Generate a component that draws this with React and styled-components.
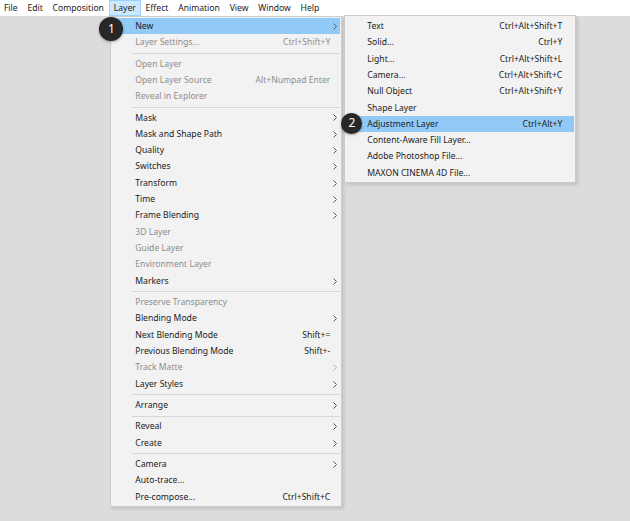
import React from 'react';
import styled, { createGlobalStyle } from 'styled-components';

const GlobalStyle = createGlobalStyle`
  html, body {
    margin: 0;
    padding: 0;
    background: #dcdcdc;
    font-family: "Noto Sans", "Liberation Sans", sans-serif;
    font-size: 8.6px;
    color: #1b1b1b;
  }
  #root {
    width: 630px;
    height: 521px;
    overflow: hidden;
  }
`

const Page = styled.div`
  width: 630px;
  height: 521px;
  background: #dcdcdc;
`

const MenuBar = styled.nav`
  display: flex;
  align-items: stretch;
  height: 16px;
  padding-left: 0;
  margin-left: -1px;
  background: #ffffff;
`

const BarItem = styled.div`
  position: relative;
  display: flex;
  align-items: center;
  padding: 0 3.9px;
  box-sizing: border-box;
  border: 1px solid ${p => p.$open ? '#99d1ff' : 'transparent'};
  background: ${p => p.$open ? '#cce8ff' : 'transparent'};
  white-space: nowrap;
  line-height: 1;
`

const Menu = styled.div`
  position: absolute;
  top: ${p => p.$top}px;
  left: ${p => p.$left};
  width: ${p => p.$width}px;
  box-sizing: border-box;
  padding: ${p => p.$pad || '1px'};
  background: #f2f2f2;
  border: 1px solid #cccccc;
  box-shadow: 2px 2px 3px rgba(0, 0, 0, 0.12);
  z-index: ${p => p.$z || 1};
`

const Row = styled.div`
  position: relative;
  display: grid;
  grid-template-columns: 1fr auto ${p => p.$arrowCol}px;
  align-items: center;
  height: 16.33px;
  padding-left: ${p => p.$indent}px;
  background: ${p => p.$active ? '#91c9f7' : 'transparent'};
  color: ${p => p.$disabled ? '#8d8d8d' : '#1b1b1b'};
  white-space: nowrap;
  line-height: 1;
`

const Shortcut = styled.span`
  text-align: right;
`

const ArrowCell = styled.span`
  display: flex;
  justify-content: flex-end;
  padding-right: 3px;
  color: ${p => p.$disabled ? '#b0b0b0' : '#555555'};
`

const Separator = styled.div`
  height: 5px;
  display: flex;
  align-items: center;
  padding-left: 20px;
  &::after {
    content: '';
    flex: 1;
    height: 1px;
    background: #d6d6d6;
  }
`

const Badge = styled.div`
  position: absolute;
  left: ${p => p.$x}px;
  top: ${p => p.$y}px;
  width: ${p => p.$size}px;
  height: ${p => p.$size}px;
  border-radius: 50%;
  background: #272727;
  color: #ffffff;
  display: flex;
  align-items: center;
  justify-content: center;
  font-family: "Noto Sans", "Liberation Sans", sans-serif;
  font-size: 12px;
  line-height: 1;
  box-shadow: 0 1px 3px rgba(0, 0, 0, 0.35);
  z-index: 5;
`

const Chevron = () => (
  <svg width="4" height="7" viewBox="0 0 4 7">
    <path d="M0.5 0.5 L3.5 3.5 L0.5 6.5" fill="none" stroke="currentColor" strokeWidth="1" />
  </svg>
)

const SEP = { sep: true }

const layerItems = [
  { label: 'New', arrow: true, active: true, submenu: true },
  { label: 'Layer Settings...', shortcut: 'Ctrl+Shift+Y', disabled: true },
  SEP,
  { label: 'Open Layer', disabled: true },
  { label: 'Open Layer Source', shortcut: 'Alt+Numpad Enter', disabled: true },
  { label: 'Reveal in Explorer', disabled: true },
  SEP,
  { label: 'Mask', arrow: true },
  { label: 'Mask and Shape Path', arrow: true },
  { label: 'Quality', arrow: true },
  { label: 'Switches', arrow: true },
  { label: 'Transform', arrow: true },
  { label: 'Time', arrow: true },
  { label: 'Frame Blending', arrow: true },
  { label: '3D Layer', disabled: true },
  { label: 'Guide Layer', disabled: true },
  { label: 'Environment Layer', disabled: true },
  { label: 'Markers', arrow: true },
  SEP,
  { label: 'Preserve Transparency', disabled: true },
  { label: 'Blending Mode', arrow: true },
  { label: 'Next Blending Mode', shortcut: 'Shift+=' },
  { label: 'Previous Blending Mode', shortcut: 'Shift+-' },
  { label: 'Track Matte', arrow: true, disabled: true },
  { label: 'Layer Styles', arrow: true },
  SEP,
  { label: 'Arrange', arrow: true },
  SEP,
  { label: 'Reveal', arrow: true },
  { label: 'Create', arrow: true },
  SEP,
  { label: 'Camera', arrow: true },
  { label: 'Auto-trace...' },
  { label: 'Pre-compose...', shortcut: 'Ctrl+Shift+C' },
]

const newItems = [
  { label: 'Text', shortcut: 'Ctrl+Alt+Shift+T' },
  { label: 'Solid...', shortcut: 'Ctrl+Y' },
  { label: 'Light...', shortcut: 'Ctrl+Alt+Shift+L' },
  { label: 'Camera...', shortcut: 'Ctrl+Alt+Shift+C' },
  { label: 'Null Object', shortcut: 'Ctrl+Alt+Shift+Y' },
  { label: 'Shape Layer' },
  { label: 'Adjustment Layer', shortcut: 'Ctrl+Alt+Y', active: true, badge: '2' },
  { label: 'Content-Aware Fill Layer...' },
  { label: 'Adobe Photoshop File...' },
  { label: 'MAXON CINEMA 4D File...' },
]

const barItems = ['File', 'Edit', 'Composition', 'Layer', 'Effect', 'Animation', 'View', 'Window', 'Help']

const NewSubmenu = () => (
  <Menu $top={-3} $left="calc(100% + 4px)" $width={232} $pad="2px 1px 1px 1px" $z={2}>
    {newItems.map(item => (
      <Row key={item.label} $indent={21} $arrowCol={12} $active={item.active}>
        <span>{item.label}</span>
        <Shortcut>{item.shortcut}</Shortcut>
        <span />
        {item.badge && <Badge $x={-5} $y={-3} $size={21}>{item.badge}</Badge>}
      </Row>
    ))}
  </Menu>
)

const LayerMenu = () => (
  <Menu $top={15} $left="0.5px" $width={232}>
    {layerItems.map((item, i) => item.sep ? (
      <Separator key={'sep' + i} />
    ) : (
      <Row key={item.label} $indent={23} $arrowCol={10} $active={item.active} $disabled={item.disabled}>
        <span>{item.label}</span>
        <Shortcut>{item.shortcut}</Shortcut>
        <ArrowCell $disabled={item.disabled}>{item.arrow && <Chevron />}</ArrowCell>
        {item.submenu && <NewSubmenu />}
      </Row>
    ))}
    <Badge $x={-12} $y={0} $size={24}>1</Badge>
  </Menu>
)

export default function App() {
  return (
    <Page>
      <GlobalStyle />
      <MenuBar>
        {barItems.map(name => (
          <BarItem key={name} $open={name === 'Layer'}>
            {name}
            {name === 'Layer' && <LayerMenu />}
          </BarItem>
        ))}
      </MenuBar>
    </Page>
  )
}
